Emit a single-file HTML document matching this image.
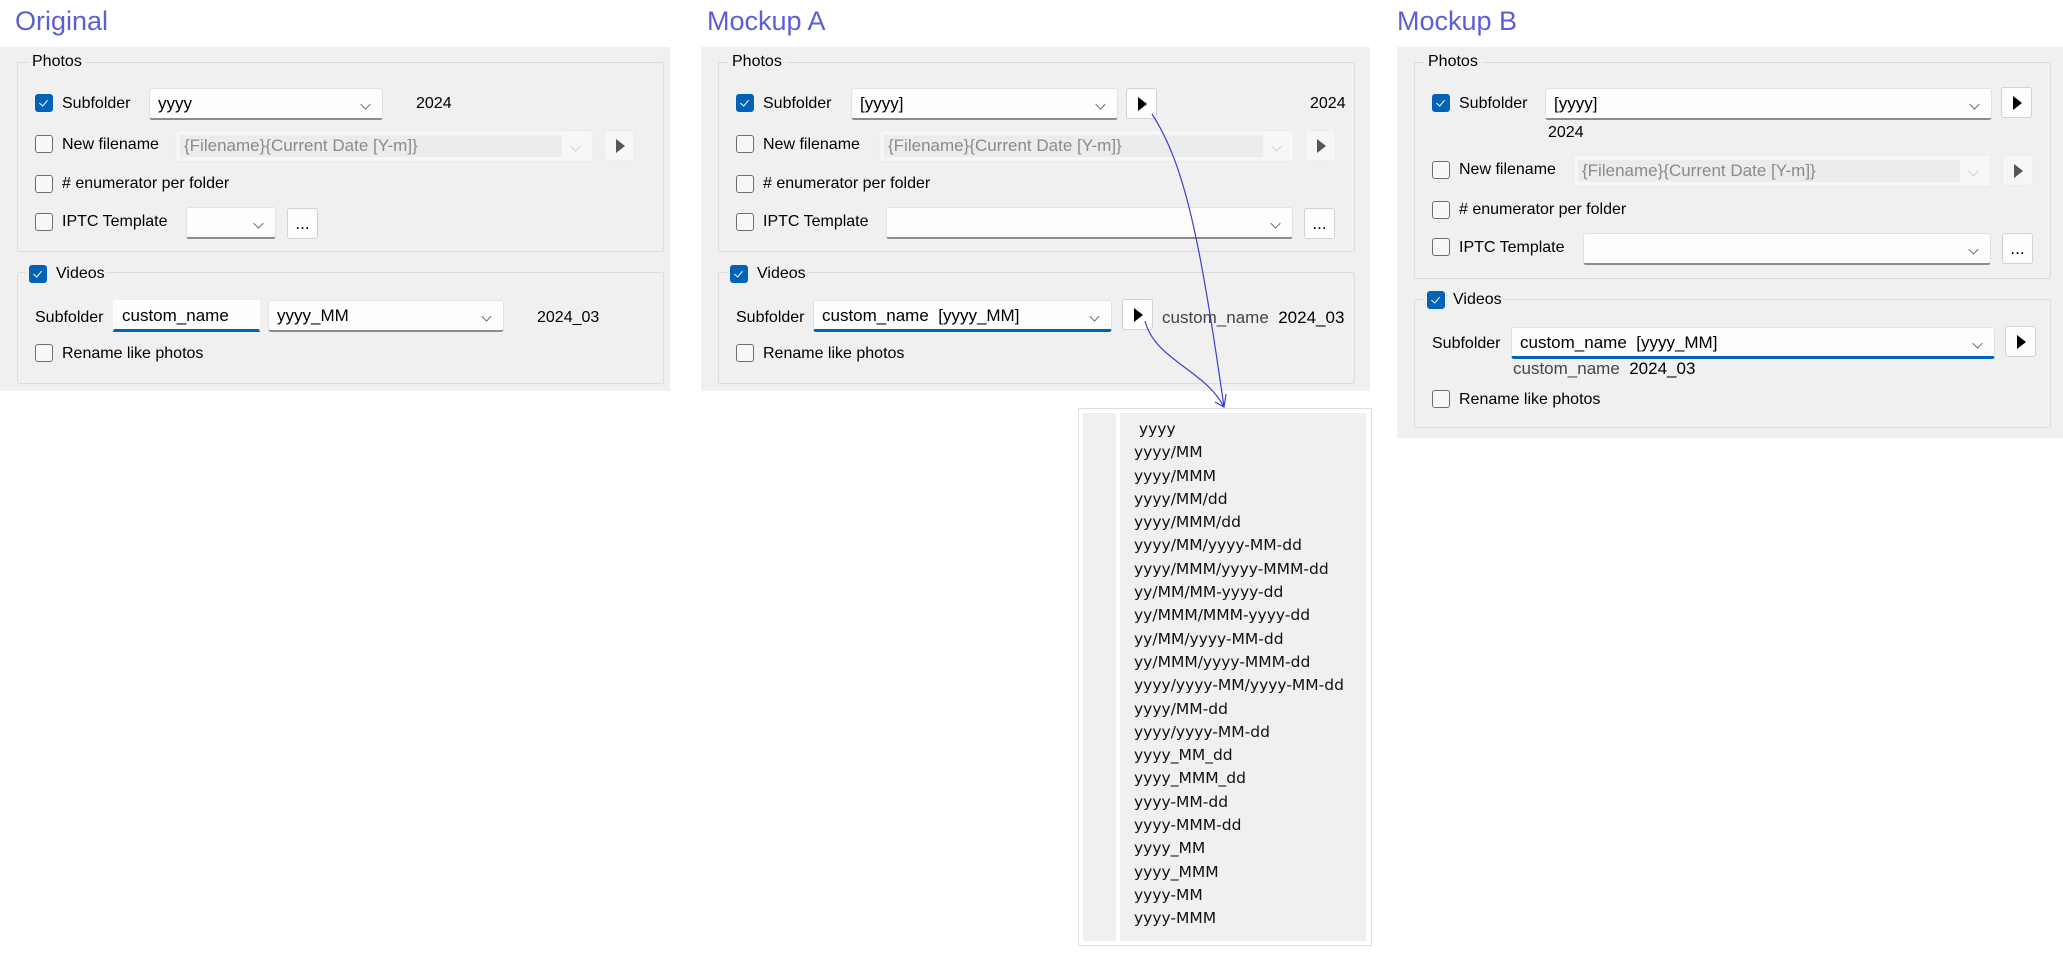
<!DOCTYPE html>
<html><head><meta charset="utf-8">
<style>
*{box-sizing:border-box;margin:0;padding:0}
body{width:2063px;height:953px;background:#fff;position:relative;overflow:hidden;font-family:"Liberation Sans",sans-serif;font-size:16px;color:#000}
.a{position:absolute}
.title{font-size:27px;color:#5b5fd6;top:6px}
.panel{background:#f0f0f0}
.grp{border:1px solid #dcdcdc;border-radius:2px}
.lbl{background:#f0f0f0;padding:0 4px;line-height:18px}
.t{line-height:20px;white-space:nowrap}
.cb{width:18px;height:18px;border:1px solid #6e6e6e;border-radius:3px;background:#f8f8f8}
.cb.on{background:#0063b8;border-color:#0063b8}
.cb.on::after{content:"";position:absolute;left:5px;top:3px;width:4px;height:7px;border:solid #fff;border-width:0 1px 1px 0;transform:rotate(40deg)}
.combo{background:#fdfdfd;border:1px solid #e2e2e2;border-bottom:2px solid #8c8c8c;border-radius:3px;height:32px;padding-left:8px;line-height:30px;font-size:17px}
.combo.dis{background:#f7f7f7;border-color:#ececec;border-bottom:1px solid #ececec;color:#8a8a8a}
.combo.dis .in{position:absolute;left:4px;top:4px;bottom:4px;right:30px;background:#ececec}
.combo.focus{border-bottom:3px solid #0063b8}
.chev{position:absolute;right:12px;top:11px;width:9px;height:9px;border:solid #555;border-width:0 1px 1px 0;transform:rotate(45deg) scale(.8)}
.dis .chev{border-color:#c8c8c8}
.btn{background:#fdfdfd;border:1px solid #d2d2d2;border-radius:3px;height:31px;width:31px}
.btn.dis{background:#f6f6f6;border-color:#ececec}
.tri{position:absolute;left:11px;top:8px;width:0;height:0;border-left:9px solid #000;border-top:7px solid transparent;border-bottom:7px solid transparent}
.dis .tri{border-left-color:#555}
.dots{text-align:center;line-height:30px;font-size:17px}
.list div{height:23.3px;line-height:23px;font-family:"DejaVu Sans",sans-serif;font-size:15.5px;color:#111;white-space:nowrap}
</style></head><body>

<!-- ORIGINAL -->
<div class="a title" style="left:15px">Original</div>
<div class="a panel" style="left:0;top:47px;width:670px;height:344px"></div>
<div class="a grp" style="left:17px;top:62px;width:647px;height:190px"></div>
<div class="a lbl t" style="left:28px;top:52px">Photos</div>
<div class="a cb on" style="left:35px;top:94px"></div>
<div class="a t" style="left:62px;top:94px">Subfolder</div>
<div class="a combo" style="left:149px;top:88px;width:234px">yyyy<span class="chev"></span></div>
<div class="a t" style="left:416px;top:94px">2024</div>
<div class="a cb" style="left:35px;top:135px"></div>
<div class="a t" style="left:62px;top:135px">New filename</div>
<div class="a combo dis" style="left:175px;top:130px;width:418px"><span class="in"></span><span class="a" style="left:8px;top:0">{Filename}{Current Date [Y-m]}</span><span class="chev"></span></div>
<div class="a btn dis" style="left:604px;top:130px"><span class="tri"></span></div>
<div class="a cb" style="left:35px;top:175px"></div>
<div class="a t" style="left:62px;top:174px"># enumerator per folder</div>
<div class="a cb" style="left:35px;top:213px"></div>
<div class="a t" style="left:62px;top:212px">IPTC Template</div>
<div class="a combo" style="left:186px;top:207px;width:90px"><span class="chev"></span></div>
<div class="a btn dots" style="left:287px;top:208px">...</div>
<div class="a grp" style="left:17px;top:272px;width:647px;height:112px"></div>
<div class="a lbl" style="left:26px;top:262px;width:80px;height:24px"></div>
<div class="a cb on" style="left:29px;top:265px"></div>
<div class="a t" style="left:56px;top:264px">Videos</div>
<div class="a t" style="left:35px;top:308px">Subfolder</div>
<div class="a combo focus" style="left:113px;top:300px;width:147px;border-color:#fff;border-bottom-color:#0063b8;border-radius:0">custom_name</div>
<div class="a combo" style="left:268px;top:300px;width:236px">yyyy_MM<span class="chev"></span></div>
<div class="a t" style="left:537px;top:308px">2024_03</div>
<div class="a cb" style="left:35px;top:344px"></div>
<div class="a t" style="left:62px;top:344px">Rename like photos</div>

<!-- MOCKUP A -->
<div class="a title" style="left:707px">Mockup A</div>
<div class="a panel" style="left:701px;top:47px;width:669px;height:344px"></div>
<div class="a grp" style="left:718px;top:62px;width:637px;height:190px"></div>
<div class="a lbl t" style="left:728px;top:52px">Photos</div>
<div class="a cb on" style="left:736px;top:94px"></div>
<div class="a t" style="left:763px;top:94px">Subfolder</div>
<div class="a combo" style="left:851px;top:88px;width:267px">[yyyy]<span class="chev"></span></div>
<div class="a btn" style="left:1126px;top:88px"><span class="tri"></span></div>
<div class="a t" style="left:1310px;top:94px">2024</div>
<div class="a cb" style="left:736px;top:135px"></div>
<div class="a t" style="left:763px;top:135px">New filename</div>
<div class="a combo dis" style="left:879px;top:130px;width:415px"><span class="in"></span><span class="a" style="left:8px;top:0">{Filename}{Current Date [Y-m]}</span><span class="chev"></span></div>
<div class="a btn dis" style="left:1305px;top:130px"><span class="tri"></span></div>
<div class="a cb" style="left:736px;top:175px"></div>
<div class="a t" style="left:763px;top:174px"># enumerator per folder</div>
<div class="a cb" style="left:736px;top:213px"></div>
<div class="a t" style="left:763px;top:212px">IPTC Template</div>
<div class="a combo" style="left:886px;top:207px;width:407px"><span class="chev"></span></div>
<div class="a btn dots" style="left:1304px;top:208px">...</div>
<div class="a grp" style="left:718px;top:272px;width:637px;height:112px"></div>
<div class="a lbl" style="left:727px;top:262px;width:80px;height:24px"></div>
<div class="a cb on" style="left:730px;top:265px"></div>
<div class="a t" style="left:757px;top:264px">Videos</div>
<div class="a t" style="left:736px;top:308px">Subfolder</div>
<div class="a combo focus" style="left:813px;top:300px;width:299px">custom_name&nbsp; [yyyy_MM]<span class="chev"></span></div>
<div class="a btn" style="left:1122px;top:299px"><span class="tri"></span></div>
<div class="a t" style="left:1162px;top:308px;font-size:17px"><span style="color:#444">custom_name</span>&nbsp; 2024_03</div>
<div class="a cb" style="left:736px;top:344px"></div>
<div class="a t" style="left:763px;top:344px">Rename like photos</div>

<!-- popup list -->
<div class="a" style="left:1078px;top:408px;width:294px;height:538px;background:#fff;border:1px solid #dedede"></div>
<div class="a" style="left:1083px;top:413px;width:33px;height:528px;background:#f0f0f0"></div>
<div class="a list" style="left:1120px;top:413px;width:246px;height:528px;background:#f0f0f0;padding:5px 0 0 14px">
<div>&nbsp;yyyy</div><div>yyyy/MM</div><div>yyyy/MMM</div><div>yyyy/MM/dd</div><div>yyyy/MMM/dd</div><div>yyyy/MM/yyyy-MM-dd</div><div>yyyy/MMM/yyyy-MMM-dd</div><div>yy/MM/MM-yyyy-dd</div><div>yy/MMM/MMM-yyyy-dd</div><div>yy/MM/yyyy-MM-dd</div><div>yy/MMM/yyyy-MMM-dd</div><div>yyyy/yyyy-MM/yyyy-MM-dd</div><div>yyyy/MM-dd</div><div>yyyy/yyyy-MM-dd</div><div>yyyy_MM_dd</div><div>yyyy_MMM_dd</div><div>yyyy-MM-dd</div><div>yyyy-MMM-dd</div><div>yyyy_MM</div><div>yyyy_MMM</div><div>yyyy-MM</div><div>yyyy-MMM</div>
</div>
<svg class="a" style="left:0;top:0" width="2063" height="953">
<path d="M1152 114 C1185 165 1200 240 1224 407" fill="none" stroke="#3a3fd0" stroke-width="1.2"/>
<path d="M1145 321 C1155 360 1205 370 1224 407" fill="none" stroke="#3a3fd0" stroke-width="1.2"/>
<path d="M1215 402 L1224 407 L1226 394" fill="none" stroke="#3a3fd0" stroke-width="1.2"/>
</svg>

<!-- MOCKUP B -->
<div class="a title" style="left:1397px">Mockup B</div>
<div class="a panel" style="left:1397px;top:47px;width:666px;height:391px"></div>
<div class="a grp" style="left:1414px;top:62px;width:637px;height:217px"></div>
<div class="a lbl t" style="left:1424px;top:52px">Photos</div>
<div class="a cb on" style="left:1432px;top:94px"></div>
<div class="a t" style="left:1459px;top:94px">Subfolder</div>
<div class="a combo" style="left:1545px;top:88px;width:447px">[yyyy]<span class="chev"></span></div>
<div class="a btn" style="left:2001px;top:87px"><span class="tri"></span></div>
<div class="a t" style="left:1548px;top:123px">2024</div>
<div class="a cb" style="left:1432px;top:161px"></div>
<div class="a t" style="left:1459px;top:160px">New filename</div>
<div class="a combo dis" style="left:1573px;top:155px;width:418px"><span class="in"></span><span class="a" style="left:8px;top:0">{Filename}{Current Date [Y-m]}</span><span class="chev"></span></div>
<div class="a btn dis" style="left:2002px;top:155px"><span class="tri"></span></div>
<div class="a cb" style="left:1432px;top:201px"></div>
<div class="a t" style="left:1459px;top:200px"># enumerator per folder</div>
<div class="a cb" style="left:1432px;top:238px"></div>
<div class="a t" style="left:1459px;top:238px">IPTC Template</div>
<div class="a combo" style="left:1583px;top:233px;width:408px"><span class="chev"></span></div>
<div class="a btn dots" style="left:2002px;top:233px">...</div>
<div class="a grp" style="left:1414px;top:299px;width:637px;height:129px"></div>
<div class="a lbl" style="left:1423px;top:289px;width:80px;height:24px"></div>
<div class="a cb on" style="left:1427px;top:291px"></div>
<div class="a t" style="left:1453px;top:290px">Videos</div>
<div class="a t" style="left:1432px;top:334px">Subfolder</div>
<div class="a combo focus" style="left:1511px;top:327px;width:484px">custom_name&nbsp; [yyyy_MM]<span class="chev"></span></div>
<div class="a btn" style="left:2005px;top:326px"><span class="tri"></span></div>
<div class="a t" style="left:1513px;top:359px;font-size:17px"><span style="color:#444">custom_name</span>&nbsp; 2024_03</div>
<div class="a cb" style="left:1432px;top:390px"></div>
<div class="a t" style="left:1459px;top:390px">Rename like photos</div>
</body></html>
